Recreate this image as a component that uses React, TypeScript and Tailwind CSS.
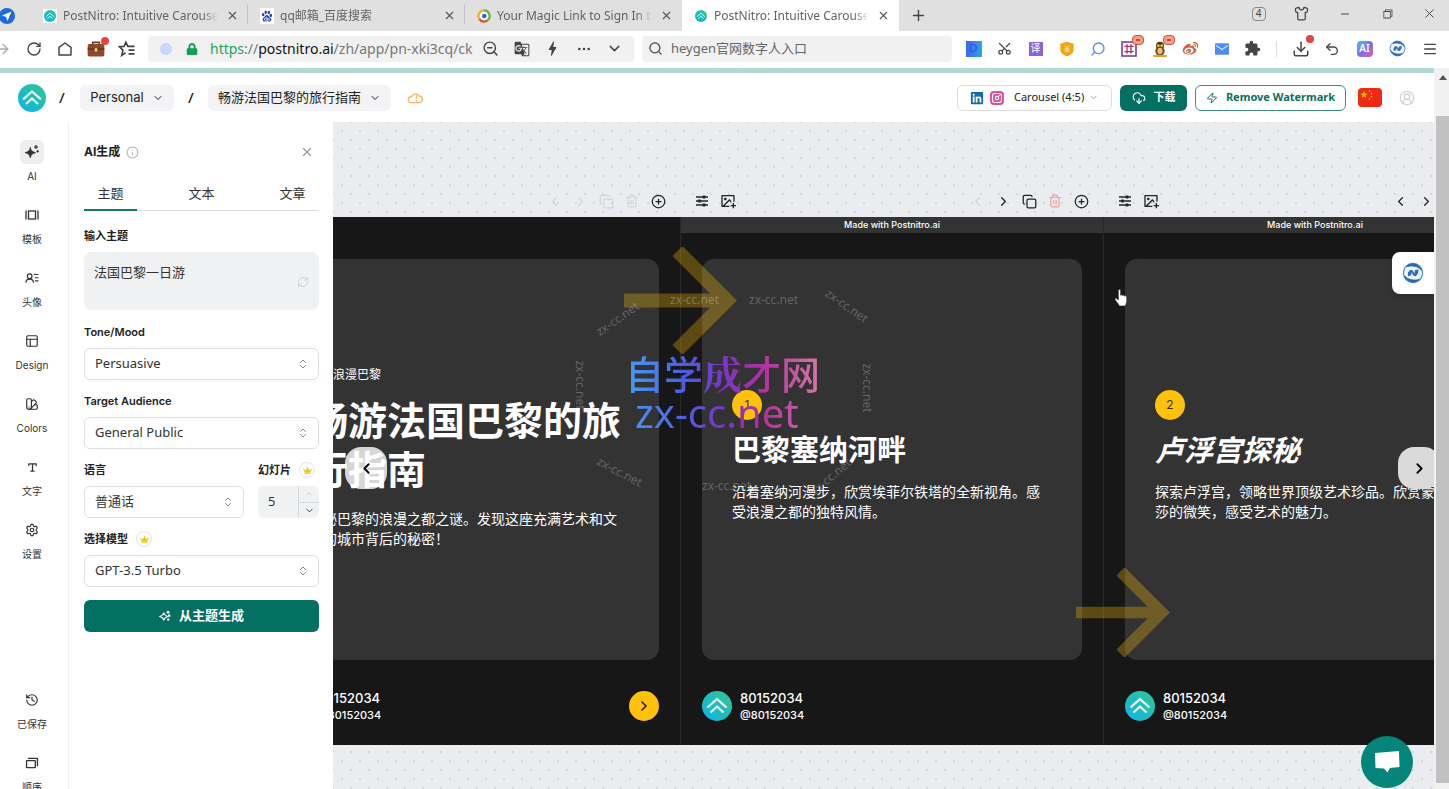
import type { ReactNode } from "react";
import {
  ChevronDown,
  ChevronLeft,
  ChevronRight,
  ChevronUp,
  ChevronsUpDown,
  CirclePlus,
  CircleUserRound,
  CloudDownload,
  Copy,
  History,
  Info,
  Menu,
  Minus,
  PanelsTopLeft,
  Plus,
  RefreshCw,
  RotateCw,
  Scissors,
  Search,
  Settings,
  Shirt,
  SwatchBook,
  Trash2,
  Undo2,
  X,
  Zap,
  ZoomOut,
  ArrowRight,
  Download,
  Ellipsis,
} from "lucide-react";
import { RiBaiduFill, RiImageAddLine, RiWeiboFill } from "react-icons/ri";
import { VscChromeRestore } from "react-icons/vsc";
import { FaCrown, FaLinkedin, FaLock } from "react-icons/fa";
import { MdBolt, MdExtension, MdGTranslate } from "react-icons/md";
import { PiCardsBold, PiTextTBold, PiInstagramLogoBold } from "react-icons/pi";

function Logo({ className }: { className: string }) {
  return (
    <svg viewBox="0 0 30 30" className={className} aria-hidden="true">
      <defs>
        <linearGradient id="logo" x1="0.9" y1="0.1" x2="0.2" y2="0.9">
          <stop offset="0" stopColor="#2fc39b" />
          <stop offset="1" stopColor="#10b7dc" />
        </linearGradient>
      </defs>
      <circle cx="15" cy="15" r="15" fill="url(#logo)" />
      <path d="M5.500 16.500 15 8l9.500 8.500M8.500 21.500 15 15.500l6.500 6" fill="none" stroke="#e8fbf8" strokeWidth="2.300" />
    </svg>
  );
}

function GlobeMark({ className }: { className: string }) {
  return (
    <svg viewBox="0 0 24 24" className={className} aria-hidden="true">
      <circle cx="12" cy="12" r="10.500" fill="#eef6ff" stroke="#3a86d8" strokeWidth="1.200" />
      <path d="M5 5C9 .5 18 1 21.500 9 17 4 11 3.500 5 5ZM19 19c-4 4.500-13 4-16.500-4C7 20 13 20.500 19 19Z" fill="#2b62b8" stroke="#2b62b8" />
      <path d="M6.500 15.500v-4l2.500-3 2.500.5 2 3.500L14 9l4-1-.5 4.500-2.500 3-2.500-.5-2-3.500-.5 3Z" fill="#2f6cc4" />
    </svg>
  );
}

function Sparkle({ className, filled }: { className: string; filled?: boolean }) {
  return (
    <svg viewBox="0 0 24 24" className={className} fill={filled ? "currentColor" : "none"} stroke="currentColor" strokeWidth={filled ? 1 : 2.2} aria-hidden="true">
      <path d="M9.500 5c1 5 2.500 6.500 8 8-5.500 1.500-7 3-8 8-1-5-2.500-6.500-8-8 5.500-1.500 7-3 8-8Z" />
      <path d="M18 1.500c.4 2 1 2.600 3 3-2 .4-2.600 1-3 3-.4-2-1-2.600-3-3 2-.4 2.600-1 3-3Z" fill="currentColor" />
      <circle cx="20.500" cy="11" r="1.300" fill="currentColor" />
      {!filled && <circle cx="18.500" cy="19" r="1.300" fill="currentColor" />}
    </svg>
  );
}

function Sliders() {
  return (
    <svg viewBox="0 0 14 14" className="size-3.5" fill="none" stroke="currentColor" strokeWidth="1.400" aria-hidden="true">
      <path d="M1 3h12M1 7h12M1 11h12" />
      <path d="M9 1.500v3M4.500 5.500v3M9 9.500v3" strokeWidth="2.600" />
    </svg>
  );
}

function ArrowShape({ className }: { className: string }) {
  return (
    <svg viewBox="0 0 113 107" className={className} aria-hidden="true">
      <g opacity="0.300" fill="none" stroke="#ffc107" strokeWidth="14">
        <path d="M0 53.500H99M53.500 4 103 53.500 53.500 103" />
      </g>
    </svg>
  );
}

function Tab({ icon, title, active, divider }: { icon: ReactNode; title: string; active?: boolean; divider?: boolean }) {
  return (
    <div className={`relative flex h-full w-[217px] shrink-0 items-center gap-1.5 pr-2 pl-3 ${active ? "bg-white" : ""}`}>
      <span className="flex size-3.5 shrink-0 items-center justify-center">{icon}</span>
      <span className="min-w-0 flex-1 overflow-hidden text-[12px] leading-4 whitespace-nowrap text-[#5f6368] [mask-image:linear-gradient(to_right,black_90%,transparent)]">
        {title}
      </span>
      <button aria-label="Close tab" className="flex size-4 items-center justify-center text-[#555]">
        <X size={13} />
      </button>
      {divider && <span className="absolute top-1 right-0 h-5 w-px bg-[#c4c4c4]" />}
    </div>
  );
}

function BrowserTabs() {
  return (
    <div className="flex h-[31px] shrink-0 items-center overflow-hidden bg-[#e0e0e0]">
      <div className="flex w-[31px] shrink-0">
        <span className="-ml-px flex size-4 items-center justify-center rounded-full bg-[#1a6be0]">
          <svg viewBox="0 0 24 24" className="size-3 fill-white" aria-hidden="true">
            <path d="M21 3 2 11l8 3 3 8Z" />
          </svg>
        </span>
      </div>
      <Tab divider icon={<span className="flex size-3.5 items-center justify-center bg-white"><Logo className="size-3" /></span>} title="PostNitro: Intuitive Carouse" />
      <Tab divider icon={<RiBaiduFill size={16} className="bg-white text-[#2a3fc4]" />} title="qq邮箱_百度搜索" />
      <Tab
        icon={
          <svg viewBox="0 0 24 24" className="size-4" aria-hidden="true">
            <circle cx="12" cy="12" r="10" fill="#fff" />
            <g fill="none" strokeWidth="4">
              <path d="M12 2.500A9.500 9.500 0 0 0 4 17" stroke="#f2b01e" />
              <path d="M4 17a9.500 9.500 0 0 0 14.500 2" stroke="#e5562d" />
              <path d="M12 2.500A9.500 9.500 0 0 1 18.500 19" stroke="#6cb33f" />
            </g>
            <circle cx="12.500" cy="12" r="4" fill="#1b6fd0" />
          </svg>
        }
        title="Your Magic Link to Sign In t"
      />
      <Tab active icon={<Logo className="size-3" />} title="PostNitro: Intuitive Carouse" />
      <button aria-label="New tab" className="flex w-[38px] items-center justify-center text-[#444]">
        <Plus size={17} />
      </button>
      <div className="ml-auto flex h-full items-center pb-1 text-[#444]">
        <span className="flex w-[43px] justify-center">
          <span className="flex h-3.5 w-3.5 items-center justify-center rounded-sm border border-[#888] text-[10px]">4</span>
        </span>
        <button aria-label="Themes" className="flex w-[43px] justify-center"><Shirt size={15} /></button>
        <button aria-label="Minimize" className="flex w-[43px] justify-center"><Minus size={12} /></button>
        <button aria-label="Restore" className="flex w-[43px] justify-center"><VscChromeRestore size={13} /></button>
        <button aria-label="Close" className="flex w-10 justify-center"><X size={15} strokeWidth={1.5} /></button>
      </div>
    </div>
  );
}

function IconSlot({ label, children }: { label: string; children: ReactNode }) {
  return (
    <button aria-label={label} className="relative flex h-6 w-[31px] shrink-0 items-center justify-center">
      {children}
    </button>
  );
}

function RedTag() {
  return (
    <span className="absolute -top-0.5 right-0 flex h-2.5 w-3 items-center justify-center rounded-sm border border-[#c4593f] bg-[#f0a08c]">
      <span className="h-0.5 w-1 bg-[#d8432c]" />
    </span>
  );
}

function BrowserToolbar() {
  return (
    <div className="flex h-[37px] shrink-0 items-center overflow-hidden bg-white pb-0.5 text-[#444]">
      <div className="-ml-[13px] flex shrink-0">
        <IconSlot label="Forward"><ArrowRight size={16} className="text-[#aaa]" /></IconSlot>
        <IconSlot label="Reload"><RotateCw size={16} /></IconSlot>
        <IconSlot label="Home">
          <svg viewBox="0 0 24 24" className="size-4" fill="none" stroke="currentColor" strokeWidth="2.200" strokeLinejoin="round"><path d="M3 21V9.500L12 3l9 6.500V21Z" /></svg>
        </IconSlot>
        <IconSlot label="Work">
          <svg viewBox="0 0 24 24" className="size-5" aria-hidden="true">
            <path d="M8 7V4h8v3" fill="none" stroke="#6b3d26" strokeWidth="2" />
            <rect x="2" y="6" width="20" height="15" rx="2" fill="#8a4b2c" />
            <path d="M2 12h20" stroke="#5d301b" strokeWidth="1.500" />
            <rect x="10.500" y="11" width="3" height="4" fill="#f1d29b" />
          </svg>
          <span className="absolute top-0 right-0.5 size-2 rounded-full bg-[#e5443a]" />
        </IconSlot>
        <IconSlot label="Favorites">
          <svg viewBox="0 0 24 24" className="size-[18px]" fill="none" stroke="currentColor" strokeWidth="2.200"><path d="m10 17-5 3.500 1.500-7L2 9l6-.5L10.500 3l2.500 5.500h9M14 13.500h8M14 18.500h8" /></svg>
        </IconSlot>
      </div>
      <div className="ml-1.5 flex h-[26px] w-[486px] shrink-0 items-center rounded-sm bg-[#f1f1f1] pr-1">
        <span className="ml-3 size-3 shrink-0 rounded-full bg-[#c6d8fb]" />
        <FaLock size={12} className="ml-3.5 shrink-0 text-[#12a150]" />
        <div className="ml-3 w-[266px] overflow-hidden text-[14px] leading-5 whitespace-nowrap text-[#777]">
          <span className="text-[#1fa35c]">https</span>://<span className="text-[#111]">postnitro.ai</span>/zh/app/pn-xki3cq/ck
        </div>
        <IconSlot label="Zoom out"><ZoomOut size={17} /></IconSlot>
        <IconSlot label="Translate"><MdGTranslate size={16} /></IconSlot>
        <IconSlot label="Speed"><MdBolt size={19} /></IconSlot>
        <IconSlot label="More"><Ellipsis size={16} /></IconSlot>
        <IconSlot label="Expand"><ChevronDown size={17} /></IconSlot>
      </div>
      <label className="ml-2 flex h-[26px] w-[310px] shrink items-center gap-2 rounded-sm bg-[#f1f1f1] px-1.5">
        <Search size={15} />
        <input aria-label="Search" defaultValue="heygen官网数字人入口" className="min-w-0 flex-1 bg-transparent text-[13px] text-[#666] outline-none" />
      </label>
      <div className="ml-auto flex shrink-0 items-center">
        <IconSlot label="D"><span className="flex size-4 items-center justify-center bg-gradient-to-r from-[#3a66ee] to-[#27a7e8] text-[11px] text-[#4b3fe0]">D</span></IconSlot>
        <IconSlot label="Screenshot"><Scissors size={15} className="-rotate-90" /></IconSlot>
        <IconSlot label="Translate page"><span className="flex size-3.5 items-center justify-center bg-[#8a63d8] text-[10px] text-white">译</span></IconSlot>
        <IconSlot label="Coupons">
          <svg viewBox="0 0 24 24" className="size-4" aria-hidden="true"><path d="M12 1 22 4v9c0 5-5 8-10 10C7 21 2 18 2 13V4Z" fill="#f5a60c" /><path d="m8.500 7 3.500 4 3.500-4M12 11v6M8.500 12h7M8.500 15h7" stroke="#fff3c8" strokeWidth="1.500" fill="none" /></svg>
        </IconSlot>
        <IconSlot label="Find"><Search size={16} className="-scale-x-100 text-[#5b8fd6]" /></IconSlot>
        <IconSlot label="Grid">
          <svg viewBox="0 0 24 24" className="size-4" aria-hidden="true"><rect x="1.500" y="1.500" width="21" height="21" fill="#fff" stroke="#7b4a9c" strokeWidth="2.500" /><path d="M5 8h14M5 16h14M9 5v14M15 5v14" stroke="#b03060" strokeWidth="2" /></svg>
          <RedTag />
        </IconSlot>
        <IconSlot label="Pet">
          <svg viewBox="0 0 24 24" className="size-4" aria-hidden="true"><circle cx="12" cy="7" r="6" fill="#54351a" /><ellipse cx="12" cy="15" rx="7" ry="7" fill="#6b431c" /><ellipse cx="12" cy="15" rx="4" ry="5" fill="#e8c069" /><circle cx="9.500" cy="7" r="2" fill="#f4c542" /><circle cx="14.500" cy="7" r="2" fill="#f4c542" /><rect x="2" y="21" width="20" height="3" fill="#e0a030" /></svg>
          <RedTag />
        </IconSlot>
        <IconSlot label="Weibo"><RiWeiboFill size={17} className="text-[#c9663f]" /></IconSlot>
        <IconSlot label="Mail">
          <svg viewBox="0 0 24 20" className="h-3 w-3.5" aria-hidden="true"><rect width="24" height="20" rx="2" fill="#4d8df0" /><path d="m2 4 10 7 10-7" fill="none" stroke="#cfe2ff" strokeWidth="2" /></svg>
        </IconSlot>
        <IconSlot label="Extensions"><MdExtension size={17} /></IconSlot>
        <span className="ml-2 h-4 w-px bg-[#ddd]" />
        <div className="ml-2 flex shrink-0">
          <IconSlot label="Downloads">
            <Download size={18} />
            <span className="absolute -top-0.5 right-0.5 size-2 rounded-full bg-[#e5443a]" />
          </IconSlot>
          <IconSlot label="Undo"><Undo2 size={16} /></IconSlot>
          <span className="w-0.5" />
          <IconSlot label="AI"><span className="flex size-4 items-center justify-center rounded bg-gradient-to-br from-[#23c3ea] via-[#7b6cf0] to-[#e2559b] text-[10px] font-semibold text-white">AI</span></IconSlot>
          <span className="w-0.5" />
          <IconSlot label="Assistant"><GlobeMark className="size-[17px]" /></IconSlot>
          <span className="w-px" />
          <IconSlot label="Menu"><Menu size={16} /></IconSlot>
        </div>
        <span className="w-1" />
      </div>
    </div>
  );
}

function AppHeader() {
  return (
    <header className="flex h-[49px] shrink-0 items-center bg-white pr-[19px] pl-[18px] text-[#222]">
      <Logo className="size-7" />
      <span className="w-8 text-center text-[15px] font-medium">/</span>
      <button className="ml-0.5 flex h-[26px] w-[94px] items-center justify-center gap-2 rounded-md bg-[#f3f3f5] font-['Inter',sans-serif] text-[13px]">
        Personal <ChevronDown size={12} />
      </button>
      <span className="w-[34px] text-center text-[15px] font-medium">/</span>
      <button className="flex h-[26px] w-[183px] items-center justify-center gap-2 rounded-md bg-[#f3f3f5] text-[13px]">
        畅游法国巴黎的旅行指南 <ChevronDown size={12} />
      </button>
      <svg viewBox="0 0 24 18" className="ml-4 h-3 w-4" fill="none" stroke="#f2b765" strokeWidth="2" aria-hidden="true">
        <path d="M6 16a4.500 4.500 0 1 1 1-9 6 6 0 0 1 11-1 5 5 0 0 1 0 10ZM14 5v5M14 12v2" />
      </svg>
      <div className="ml-auto flex shrink-0 items-center whitespace-nowrap">
        <button className="flex h-[26px] w-[155px] items-center rounded-md border border-[#dcdcdf] bg-white px-3 text-[11px]">
          <FaLinkedin size={14} className="text-[#1769aa]" />
          <span className="ml-1.5 flex size-3.5 items-center justify-center rounded-sm bg-[#e0509a] text-white"><PiInstagramLogoBold size={12} /></span>
          <span className="ml-2.5">Carousel (4:5)</span>
          <ChevronDown size={11} className="ml-auto text-[#999]" />
        </button>
        <button className="ml-2 flex h-[26px] w-[67px] items-center justify-center gap-2 rounded-md bg-[#046f63] text-[11px] font-bold text-white">
          <CloudDownload size={14} /> 下载
        </button>
        <button className="ml-2 flex h-[26px] w-[151px] items-center justify-center gap-2 rounded-md border border-[#3f8f83] bg-white text-[11px] font-bold text-[#0c6f63]">
          <Zap size={12} /> Remove Watermark
        </button>
        <button aria-label="中文" className="ml-3 h-[19px] w-6 overflow-hidden rounded-sm bg-[#ee2b12]">
          <svg viewBox="0 0 24 19" className="size-full" fill="#ffc600" aria-hidden="true">
            <path d="m6 3 1 2.500 2.700.2-2.100 1.700.7 2.600L6 8.600 3.700 10l.7-2.600-2.100-1.700L5 5.500Z" />
            <circle cx="11.500" cy="3" r=".8" /><circle cx="13.500" cy="5.500" r=".8" /><circle cx="13.500" cy="8.500" r=".8" /><circle cx="11.500" cy="11" r=".8" />
          </svg>
        </button>
        <button aria-label="Account" className="ml-[17px] text-[#d3d3d6]"><CircleUserRound size={16} /></button>
      </div>
    </header>
  );
}

function RailItem({ icon, label, active }: { icon: ReactNode; label: string; active?: boolean }) {
  return (
    <a href="#" className="flex h-[63px] shrink-0 flex-col items-center text-[#333]">
      <span className={`flex size-6 items-center justify-center rounded-md ${active ? "bg-[#eceef0]" : ""}`}>{icon}</span>
      <span className="mt-1 font-['Inter','Noto_Sans_CJK_SC',sans-serif] text-[10px] leading-4">{label}</span>
    </a>
  );
}

function Rail() {
  return (
    <nav className="flex w-[69px] shrink-0 flex-col border-r border-[#f0f0f2] bg-white pt-[18px] pr-1">
      <RailItem active icon={<Sparkle filled className="size-4" />} label="AI" />
      <RailItem
        icon={
          <svg viewBox="0 0 14 14" className="size-3.5" fill="none" stroke="currentColor" strokeWidth="1.300" aria-hidden="true">
            <rect x="3.500" y="3" width="7" height="8" /><path d="M1 2.500v9M13 2.500v9" />
          </svg>
        }
        label="模板"
      />
      <RailItem
        icon={
          <svg viewBox="0 0 24 24" className="size-3.5" fill="none" stroke="currentColor" strokeWidth="2" aria-hidden="true">
            <circle cx="8" cy="9" r="4" /><path d="M1.500 20c0-8 13-8 13 0M15 6h8M17 11.500h6M17 17h6" />
          </svg>
        }
        label="头像"
      />
      <RailItem icon={<PanelsTopLeft size={14} />} label="Design" />
      <RailItem icon={<SwatchBook size={14} />} label="Colors" />
      <RailItem icon={<PiTextTBold size={13} />} label="文字" />
      <RailItem icon={<Settings size={14} />} label="设置" />
      <div className="mt-auto -mb-[25px] flex flex-col">
        <RailItem icon={<History size={14} />} label="已保存" />
        <RailItem icon={<PiCardsBold size={14} />} label="顺序" />
      </div>
    </nav>
  );
}

function Crown() {
  return (
    <span className="flex size-4 items-center justify-center rounded-full border border-[#e6e3da] bg-white">
      <FaCrown size={9} className="text-[#f2c511]" />
    </span>
  );
}

function SelectField({ id, label, value, crown }: { id: string; label: string; value: string; crown?: boolean }) {
  return (
    <div className="flex min-w-0 flex-1 flex-col gap-2">
      <div className="flex h-4 items-center gap-2">
        <label htmlFor={id} className="font-['Inter','Noto_Sans_CJK_SC',sans-serif] text-[11px] leading-4 font-semibold text-[#222]">{label}</label>
        {crown && <Crown />}
      </div>
      <div className="relative">
        <select id={id} className="h-8 w-full appearance-none rounded-md border border-[#dedee2] bg-white px-2.5 text-[13px] text-[#333]">
          <option>{value}</option>
        </select>
        <ChevronsUpDown size={12} className="pointer-events-none absolute top-2.5 right-2.5 text-[#888]" />
      </div>
    </div>
  );
}

function Panel() {
  return (
    <aside className="flex w-[264px] shrink-0 flex-col bg-white pr-3.5 pl-[15px]">
      <div className="mt-5 flex h-5 items-center">
        <h2 className="font-['Inter','Noto_Sans_CJK_SC',sans-serif] text-[12px] font-bold text-[#222]">AI生成</h2>
        <Info size={13} className="ml-1.5 text-[#b5b5b8]" />
        <button aria-label="Close panel" className="ml-auto flex size-6 items-center justify-center text-[#999]"><X size={14} /></button>
      </div>
      <div role="tablist" className="mt-4 flex h-[33px] justify-between border-b border-[#dcdce0] text-[13px] text-[#333]">
        <button role="tab" aria-selected="true" className="-mb-px w-[53px] border-b-2 border-[#14796b]">主题</button>
        <button role="tab" aria-selected="false" className="w-[53px]">文本</button>
        <button role="tab" aria-selected="false" className="w-[53px]">文章</button>
      </div>
      <label htmlFor="topic" className="mt-[17px] text-[11px] leading-4 font-bold text-[#222]">输入主题</label>
      <div className="relative mt-2 flex">
        <textarea id="topic" defaultValue="法国巴黎一日游" className="h-[58px] w-full resize-none rounded-lg bg-[#f0f1f3] px-2.5 py-2.5 text-[13px] leading-5 text-[#333] outline-none" />
        <RefreshCw size={12} className="absolute top-6 right-2.5 text-[#d0d0d4]" />
      </div>
      <form className="mt-3.5 flex flex-col gap-[13px]">
        <SelectField id="tone" label="Tone/Mood" value="Persuasive" />
        <SelectField id="audience" label="Target Audience" value="General Public" />
        <div className="flex gap-3.5">
          <SelectField id="lang" label="语言" value="普通话" />
          <div className="flex w-[61px] flex-col gap-2">
            <div className="flex h-4 items-center gap-2">
              <label htmlFor="slides" className="text-[11px] leading-4 font-bold whitespace-nowrap text-[#222]">幻灯片</label>
              <Crown />
            </div>
            <div className="flex h-8 overflow-hidden rounded-md bg-[#f0f1f3]">
              <input id="slides" defaultValue="5" inputMode="numeric" className="w-[41px] border-r border-[#d9d9dd] bg-transparent pl-2.5 text-[13px] text-[#333] outline-none" />
              <div className="flex flex-1 flex-col">
                <button type="button" aria-label="Increase" className="flex flex-1 items-center justify-center border-b border-[#d9d9dd] text-[#ccc]"><ChevronUp size={10} /></button>
                <button type="button" aria-label="Decrease" className="flex flex-1 items-center justify-center text-[#333]"><ChevronDown size={11} /></button>
              </div>
            </div>
          </div>
        </div>
        <SelectField id="model" label="选择模型" value="GPT-3.5 Turbo" crown />
        <button type="button" className="flex h-8 w-full items-center justify-center gap-2 rounded-md bg-[#046f63] text-[13px] font-bold text-white">
          <Sparkle className="size-3" /> 从主题生成
        </button>
      </form>
    </aside>
  );
}

function SlideTools({ first, second }: { first?: boolean; second?: boolean }) {
  const dim = first ? "text-[#d3d4d8]" : "text-[#222]";
  return (
    <div className="flex h-4 items-center justify-between px-3.5 text-[#222]">
      <div className="flex gap-2.5">
        <button aria-label="Slide settings" className="flex size-4 items-center justify-center"><Sliders /></button>
        <button aria-label="Add image" className="flex size-4 items-center justify-center"><RiImageAddLine size={16} /></button>
      </div>
      <div className="flex gap-2.5">
        <button aria-label="Move left" className={`flex size-4 items-center justify-center ${first || second ? "text-[#d3d4d8]" : "text-[#222]"}`}><ChevronLeft size={15} /></button>
        <button aria-label="Move right" className={`flex size-4 items-center justify-center ${dim}`}><ChevronRight size={15} /></button>
        <button aria-label="Duplicate slide" className={`flex size-4 items-center justify-center ${dim}`}><Copy size={15} /></button>
        <button aria-label="Delete slide" className={`flex size-4 items-center justify-center ${first ? "text-[#d3d4d8]" : "text-[#f0a096]"}`}><Trash2 size={14} /></button>
        <button aria-label="Add slide" className="flex size-4 items-center justify-center"><CirclePlus size={15} /></button>
      </div>
    </div>
  );
}

function SlideFrame({ kind, arrow, children }: { kind: "first" | "second" | "third"; arrow?: ReactNode; children: ReactNode }) {
  const first = kind === "first";
  return (
    <section className="flex w-[423px] shrink-0 flex-col">
      <SlideTools first={first} second={kind === "second"} />
      <article className="relative mt-2 flex h-[528px] flex-col border-l border-[#292929] bg-[#171717] text-white">
        <div className={`flex h-4 items-center justify-center font-['Inter',sans-serif] text-[9px] font-medium ${first ? "" : "bg-[#333]"}`}>
          {first ? "" : "Made with Postnitro.ai"}
        </div>
        <div className={`mx-[21px] mt-[26px] flex h-[401px] flex-col justify-center rounded-xl bg-[#333] pl-[30px] whitespace-nowrap ${first ? "pb-1" : "pb-2"}`}>
          {children}
        </div>
        <footer className="mx-[21px] mt-[29px] flex items-center gap-2 font-['Inter',sans-serif]">
          <Logo className="size-[30px]" />
          <div className="flex flex-col">
            <span className="text-[13px] leading-[18px] font-medium">80152034</span>
            <span className="text-[11px] leading-4 font-medium">@80152034</span>
          </div>
          {first && (
            <span className="ml-auto flex size-[30px] items-center justify-center rounded-full bg-[#ffc10a] text-[#222]"><ChevronRight size={16} strokeWidth={2.5} /></span>
          )}
        </footer>
        {arrow}
      </article>
    </section>
  );
}

function Badge({ n }: { n: number }) {
  return <span className="flex size-[30px] items-center justify-center rounded-full bg-[#ffc10a] font-['Inter',sans-serif] text-[12px] text-[#333]">{n}</span>;
}

function SiteMark({ className }: { className: string }) {
  return <span className={`absolute text-[12px] leading-4 text-white/25 ${className}`}>zx-cc.net</span>;
}

function Canvas() {
  return (
    <main className="relative min-w-0 flex-1 overflow-hidden bg-[#ebecf0] bg-[radial-gradient(circle,#d6d7dc_1px,transparent_1px),radial-gradient(circle,#d6d7dc_1px,transparent_1px)] bg-[length:18px_18px] bg-[position:0_0,9px_9px]">
      <div className="-ml-[76px] flex pt-[71px]">
        <SlideFrame kind="first">
          <p className="text-[12px] leading-4">探索浪漫巴黎</p>
          <h1 className="mt-3 text-[39px] leading-[49px] font-bold">畅游法国巴黎的旅<br />行指南</h1>
          <p className="mt-4 text-[14px] leading-5">揭秘巴黎的浪漫之都之谜。发现这座充满艺术和文<br />化的城市背后的秘密！</p>
        </SlideFrame>
        <SlideFrame kind="second" arrow={<ArrowShape className="absolute top-[30px] -left-[57px] w-[113px]" />}>
          <Badge n={1} />
          <h2 className="mt-2.5 text-[29px] leading-10 font-bold">巴黎塞纳河畔</h2>
          <p className="mt-3 text-[14px] leading-5">沿着塞纳河漫步，欣赏埃菲尔铁塔的全新视角。感<br />受浪漫之都的独特风情。</p>
        </SlideFrame>
        <SlideFrame kind="third" arrow={<ArrowShape className="absolute top-[351px] -left-7 w-[94px]" />}>
          <Badge n={2} />
          <h2 className="mt-2.5 text-[29px] leading-10 font-bold italic">卢浮宫探秘</h2>
          <p className="mt-3 text-[14px] leading-5">探索卢浮宫，领略世界顶级艺术珍品。欣赏蒙娜丽<br />莎的微笑，感受艺术的魅力。</p>
        </SlideFrame>
      </div>

      <button aria-label="Previous slide" className="absolute top-[325px] left-3 flex size-[42px] items-center justify-center rounded-2xl bg-white/80 text-black"><ChevronLeft size={17} strokeWidth={2.5} /></button>
      <button aria-label="Next slide" className="absolute top-[325px] -right-1.5 flex size-[42px] items-center justify-center rounded-2xl bg-[#dadada] text-black"><ChevronRight size={17} strokeWidth={2.5} /></button>
      <button aria-label="Assistant" className="absolute top-[130px] right-0 flex size-[42px] items-center justify-center rounded-l-lg bg-white shadow-md"><GlobeMark className="size-[22px]" /></button>
      <button aria-label="Chat" className="absolute right-[21px] bottom-px flex size-[52px] items-center justify-center rounded-full bg-[#03857a]">
        <svg viewBox="0 0 28 24" className="h-6 w-7 fill-white" aria-hidden="true"><path d="m2 3 24-2 .5 16-9.500 1-2.500 4.500-3.500-4L2.500 18Z" /></svg>
      </button>

      <div className="pointer-events-none absolute top-[227px] left-[292px] w-[196px] bg-[linear-gradient(to_right,#4a9cf0,#4a5fe0_30%,#7a35c8_50%,#b02fa0_70%,#d878a4)] bg-clip-text text-transparent">
        <div className="text-[39px] leading-[46px] font-medium whitespace-nowrap">自学<span className="font-['Noto_Serif_CJK_SC','Noto_Sans_CJK_SC',serif] font-bold">成</span>才网</div>
        <div className="-mt-1 pl-2.5 text-[40px] leading-10">zx-cc.net</div>
      </div>
      <div className="pointer-events-none absolute inset-0">
        <SiteMark className="top-[170px] left-[337px]" />
        <SiteMark className="top-[170px] left-[416px]" />
        <SiteMark className="top-[189px] left-[260px] -rotate-[35deg]" />
        <SiteMark className="top-[176px] left-[489px] rotate-[35deg]" />
        <SiteMark className="top-[255px] left-[222px] rotate-90" />
        <SiteMark className="top-[258px] left-[509px] rotate-90" />
        <SiteMark className="top-[342px] left-[262px] rotate-[28deg]" />
        <SiteMark className="top-[356px] left-[369px]" />
        <SiteMark className="top-[347px] left-[473px] -rotate-[40deg]" />
      </div>
      <svg viewBox="0 0 16 20" className="absolute top-[167px] left-[781px] h-[18px] w-3.5 fill-white stroke-[#222]" strokeWidth="0.600" aria-hidden="true">
        <path d="M5 1.500c0-1.500 2.500-1.500 2.500 0V7c0-1 2-1 2.200.2C10 6.500 12 6.500 12 8c.5-.8 2.500-.6 2.500 1v5c0 2-1.500 3-1.500 5H6c0-2-4.500-5.500-5-8 .5-1.500 2.500-.5 4 1.500Z" />
      </svg>
    </main>
  );
}

export default function App() {
  return (
    <div className="flex h-screen flex-col overflow-hidden bg-white font-['Noto_Sans','Noto_Sans_CJK_SC',sans-serif]">
      <BrowserTabs />
      <BrowserToolbar />
      <div className="flex min-h-0 flex-1">
        <div className="flex min-w-0 flex-1 flex-col">
          <div className="h-[5px] shrink-0 bg-[#b2d8d6]" />
          <AppHeader />
          <div className="flex min-h-0 flex-1">
            <Rail />
            <Panel />
            <Canvas />
          </div>
        </div>
        <div className="flex w-[15px] shrink-0 flex-col items-center bg-[#f1f1f1] pb-1.5 pl-0.5">
          <svg viewBox="0 0 8 5" className="mt-[7px] h-[5px] w-2 fill-[#555]" aria-hidden="true"><path d="M4 0 8 5H0Z" /></svg>
          <div className="mt-9 w-full flex-1 bg-[#c1c1c1]" />
        </div>
      </div>
    </div>
  );
}
